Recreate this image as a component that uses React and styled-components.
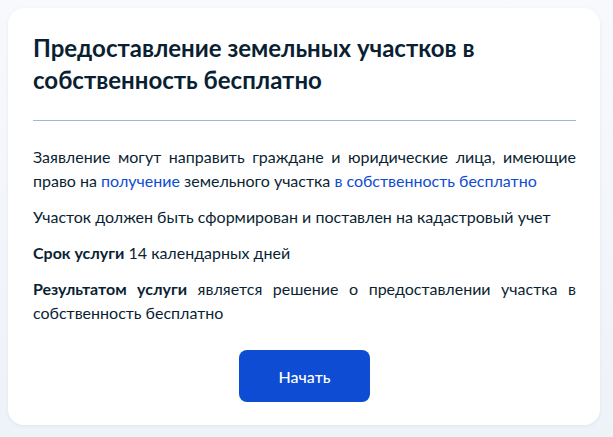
import React from "react";
import styled, { createGlobalStyle } from "styled-components";

const GlobalStyle = createGlobalStyle`
  html, body { margin: 0; padding: 0; }
  body {
    background: linear-gradient(180deg, #f8f9fd 0%, #eef2f9 100%);
    min-height: 437px;
    font-family: Lato, "Noto Sans", sans-serif;
    color: #0b1f33;
  }
`;

const Page = styled.div`
  padding: 8px 13px 12px 8px;
`;

const Card = styled.section`
  background: #ffffff;
  border-radius: 16px;
  padding: 24px 24px 23px 25px;
  box-shadow: 0 1px 4px rgba(11, 31, 51, 0.06);
`;

const Title = styled.h1`
  margin: 0;
  font-size: 24px;
  line-height: 32px;
  font-weight: 700;
  color: #0b1f33;
  max-width: 460px;
`;

const Divider = styled.hr`
  border: 0;
  height: 1px;
  background: #a3b3dc;
  margin: 24px 0 24px;
`;

const Info = styled.div`
  display: flex;
  flex-direction: column;
  gap: 12px;
`;

const Paragraph = styled.p`
  margin: 0;
  font-size: 16px;
  line-height: 24px;
  text-align: ${(p) => (p.$justify ? "justify" : "left")};
  color: #0b1f33;
`;

const Strong = styled.b`
  font-weight: 700;
`;

const Link = styled.a`
  color: #0d4cd3;
  text-decoration: none;
  cursor: pointer;
`;

const Actions = styled.div`
  display: flex;
  justify-content: center;
  margin-top: 25px;
`;

const Button = styled.button`
  width: 131px;
  height: 52px;
  border: 0;
  border-radius: 8px;
  background: #0d4cd3;
  color: #ffffff;
  font-family: Lato, "Noto Sans", sans-serif;
  font-size: 16px;
  font-weight: 500;
  cursor: pointer;
`;

export default function App() {
  return (
    <Page>
      <GlobalStyle />
      <Card>
        <Title>Предоставление земельных участков в собственность бесплатно</Title>
        <Divider />
        <Info>
          <Paragraph $justify>
            Заявление могут направить граждане и юридические лица, имеющие право на{" "}
            <Link>получение</Link> земельного участка <Link>в собственность бесплатно</Link>
          </Paragraph>
          <Paragraph>Участок должен быть сформирован и поставлен на кадастровый учет</Paragraph>
          <Paragraph>
            <Strong>Срок услуги</Strong> 14 календарных дней
          </Paragraph>
          <Paragraph $justify>
            <Strong>Результатом услуги</Strong> является решение о предоставлении участка в
            собственность бесплатно
          </Paragraph>
        </Info>
        <Actions>
          <Button>Начать</Button>
        </Actions>
      </Card>
    </Page>
  );
}
